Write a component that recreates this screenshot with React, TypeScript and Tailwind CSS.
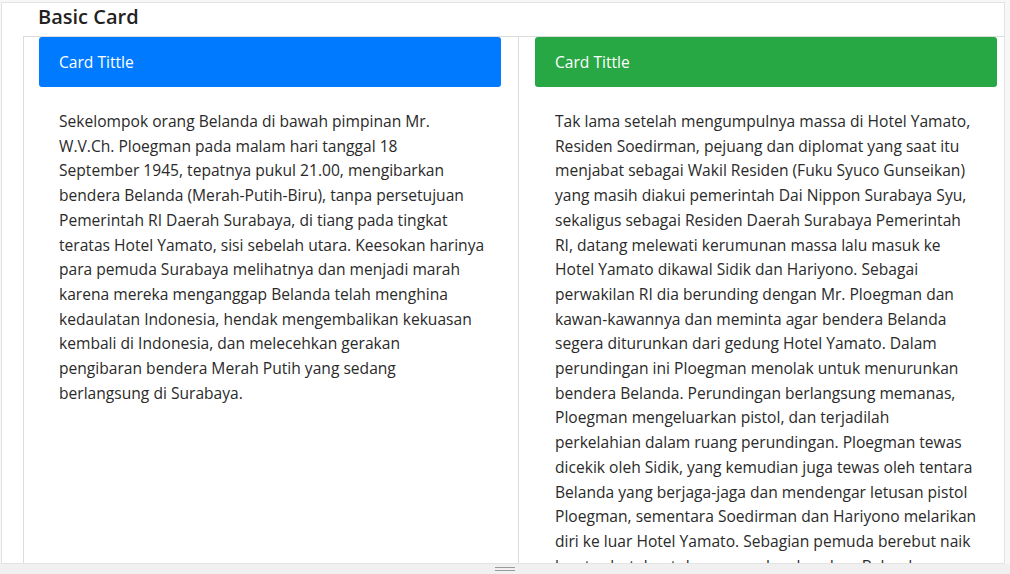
const leftLines = [
  "Sekelompok orang Belanda di bawah pimpinan Mr.",
  "W.V.Ch. Ploegman pada malam hari tanggal 18",
  "September 1945, tepatnya pukul 21.00, mengibarkan",
  "bendera Belanda (Merah-Putih-Biru), tanpa persetujuan",
  "Pemerintah RI Daerah Surabaya, di tiang pada tingkat",
  "teratas Hotel Yamato, sisi sebelah utara. Keesokan harinya",
  "para pemuda Surabaya melihatnya dan menjadi marah",
  "karena mereka menganggap Belanda telah menghina",
  "kedaulatan Indonesia, hendak mengembalikan kekuasan",
  "kembali di Indonesia, dan melecehkan gerakan",
  "pengibaran bendera Merah Putih yang sedang",
  "berlangsung di Surabaya.",
]

const rightLines = [
  "Tak lama setelah mengumpulnya massa di Hotel Yamato,",
  "Residen Soedirman, pejuang dan diplomat yang saat itu",
  "menjabat sebagai Wakil Residen (Fuku Syuco Gunseikan)",
  "yang masih diakui pemerintah Dai Nippon Surabaya Syu,",
  "sekaligus sebagai Residen Daerah Surabaya Pemerintah",
  "RI, datang melewati kerumunan massa lalu masuk ke",
  "Hotel Yamato dikawal Sidik dan Hariyono. Sebagai",
  "perwakilan RI dia berunding dengan Mr. Ploegman dan",
  "kawan-kawannya dan meminta agar bendera Belanda",
  "segera diturunkan dari gedung Hotel Yamato. Dalam",
  "perundingan ini Ploegman menolak untuk menurunkan",
  "bendera Belanda. Perundingan berlangsung memanas,",
  "Ploegman mengeluarkan pistol, dan terjadilah",
  "perkelahian dalam ruang perundingan. Ploegman tewas",
  "dicekik oleh Sidik, yang kemudian juga tewas oleh tentara",
  "Belanda yang berjaga-jaga dan mendengar letusan pistol",
  "Ploegman, sementara Soedirman dan Hariyono melarikan",
  "diri ke luar Hotel Yamato. Sebagian pemuda berebut naik",
  "ke atas hotel untuk menurunkan bendera Belanda.",
]

function Card({ title, color, lines, first }: { title: string; color: string; lines: string[]; first?: boolean }) {
  return (
    <div
      className={`w-[496px] shrink-0 border-t border-r border-[#dcdcdc] ${first ? "border-l pl-[15px]" : "pl-[16px]"}`}
    >
      <div className={`${color} flex h-[50px] w-[462px] items-center rounded-[3px] px-5 pt-[2px] text-[15.6px] text-white`}>
        {title}
      </div>
      <p className="w-[462px] px-5 pt-[22px] text-[15.6px] leading-[24.7px] whitespace-nowrap text-[#2a2a2a]">
        {lines.map((line, i) => (
          <span key={i} className="block">
            {line}
          </span>
        ))}
      </p>
    </div>
  )
}

export default function App() {
  return (
    <div
      className="flex h-[574px] w-[1010px] flex-col overflow-hidden bg-[#f7f7f7]"
      style={{ fontFamily: '"Open Sans", "Noto Sans", sans-serif' }}
    >
      <div className="ml-[1px] mt-[2px] h-[562px] w-[1004px] overflow-hidden border border-[#e3e3e3] bg-white">
        <h2 className="pl-[36px] text-[20px] leading-[28px] font-semibold text-[#222]">Basic Card</h2>
        <div className="mt-[5px] flex pl-[21px]">
          <Card title="Card Tittle" color="bg-[#007bff]" lines={leftLines} first />
          <Card title="Card Tittle" color="bg-[#28a745]" lines={rightLines} />
        </div>
      </div>
      <div className="flex flex-1 items-center justify-center bg-[#f0f0f0]">
        <div className="flex flex-col gap-[2px]">
          <div className="h-[1px] w-[20px] bg-[#9a9a9a]" />
          <div className="h-[1px] w-[20px] bg-[#9a9a9a]" />
        </div>
      </div>
    </div>
  )
}
